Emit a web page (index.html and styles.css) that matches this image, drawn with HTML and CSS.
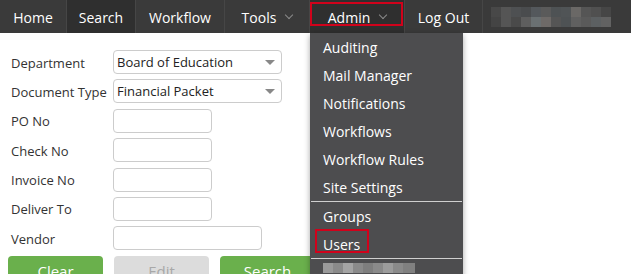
FILE: index.html
```html
<!DOCTYPE html>
<html lang="en">

<head>
    <meta charset="UTF-8">
    <meta name="viewport" content="width=device-width, initial-scale=1.0">
    <title>Search</title>

    <link rel="stylesheet" href="styles.css">
</head>

<body>
    <div class="navbar">
        <div class="nav-item item-home">Home</div>
        <div class="nav-item item-search active">Search</div>
        <div class="nav-item item-workflow">Workflow</div>
        <div class="nav-item item-tools">Tools <span class="caret"></span></div>
        <div class="nav-item item-admin open">Admin <span class="caret"></span>
            <div class="mark mark-admin"></div>
            <div class="dropdown">
                <div class="drop-item">Auditing</div>
                <div class="drop-item">Mail Manager</div>
                <div class="drop-item">Notifications</div>
                <div class="drop-item">Workflows</div>
                <div class="drop-item">Workflow Rules</div>
                <div class="drop-item">Site Settings</div>
                <div class="divider"></div>
                <div class="drop-item">Groups</div>
                <div class="drop-item users">Users
                    <div class="mark mark-users"></div>
                </div>
                <div class="divider"></div>
                <div class="drop-item">
                    <svg class="blur-small" width="92" height="10" viewBox="0 0 92 10">
                        <rect x="0" y="0" width="92" height="10" fill="#8a8a8a" />
                        <rect x="0" y="0" width="10" height="10" fill="#9a9a9a" />
                        <rect x="20" y="0" width="10" height="10" fill="#a4a4a4" />
                        <rect x="40" y="0" width="10" height="10" fill="#7e7e7e" />
                        <rect x="60" y="0" width="10" height="10" fill="#9c9c9c" />
                        <rect x="80" y="0" width="12" height="10" fill="#808080" />
                    </svg>
                </div>
            </div>
        </div>
        <div class="nav-item item-logout">Log Out</div>
        <div class="nav-user">
            <svg width="120" height="20" viewBox="0 0 120 20">
                <rect x="0" y="0" width="10" height="10" fill="#484848" />
                <rect x="10" y="0" width="10" height="10" fill="#555555" />
                <rect x="20" y="0" width="10" height="10" fill="#4e5052" />
                <rect x="30" y="0" width="10" height="10" fill="#4a4c4e" />
                <rect x="40" y="0" width="10" height="10" fill="#54585c" />
                <rect x="50" y="0" width="10" height="10" fill="#5a5a5a" />
                <rect x="60" y="0" width="10" height="10" fill="#4e5254" />
                <rect x="70" y="0" width="10" height="10" fill="#505456" />
                <rect x="80" y="0" width="10" height="10" fill="#6a6866" />
                <rect x="90" y="0" width="10" height="10" fill="#555555" />
                <rect x="100" y="0" width="10" height="10" fill="#505050" />
                <rect x="110" y="0" width="10" height="10" fill="#464646" />
                <rect x="0" y="10" width="10" height="10" fill="#444444" />
                <rect x="10" y="10" width="10" height="10" fill="#555555" />
                <rect x="20" y="10" width="10" height="10" fill="#4a4a4a" />
                <rect x="30" y="10" width="10" height="10" fill="#5e5e5e" />
                <rect x="40" y="10" width="10" height="10" fill="#6a7072" />
                <rect x="50" y="10" width="10" height="10" fill="#6e6a68" />
                <rect x="60" y="10" width="10" height="10" fill="#555555" />
                <rect x="70" y="10" width="10" height="10" fill="#4e5254" />
                <rect x="80" y="10" width="10" height="10" fill="#606060" />
                <rect x="90" y="10" width="10" height="10" fill="#5a5a5a" />
                <rect x="100" y="10" width="10" height="10" fill="#5c6062" />
                <rect x="110" y="10" width="10" height="10" fill="#626262" />
            </svg>
        </div>
    </div>

    <div class="search-form">
        <div class="form-row">
            <label>Department</label>
            <div class="select wide">Board of Education<span class="arrow"></span></div>
        </div>
        <div class="form-row">
            <label>Document Type</label>
            <div class="select wide">Financial Packet<span class="arrow"></span></div>
        </div>
        <div class="form-row">
            <label>PO No</label>
            <input type="text">
        </div>
        <div class="form-row">
            <label>Check No</label>
            <input type="text">
        </div>
        <div class="form-row">
            <label>Invoice No</label>
            <input type="text">
        </div>
        <div class="form-row">
            <label>Deliver To</label>
            <input type="text">
        </div>
        <div class="form-row">
            <label>Vendor</label>
            <input class="vendor" type="text">
        </div>
        <div class="buttons">
            <div class="btn">Clear</div>
            <div class="btn disabled">Edit</div>
            <div class="btn">Search</div>
        </div>
    </div>
</body>

</html>
```

FILE: styles.css
```css
* {
    box-sizing: border-box;
}

body {
    margin: 0;
    font-family: "Open Sans", "Noto Sans", sans-serif;
    background-color: white;
    overflow: hidden;
}

.navbar {
    height: 33px;
    background-color: #3a3a3a;
    display: flex;
    align-items: stretch;
}

.nav-item {
    position: relative;
    display: flex;
    align-items: center;
    justify-content: center;
    padding-top: 1px;
    color: white;
    font-size: 14px;
    border-right: 1px solid #464646;
}

.item-home {
    width: 67px;
}

.item-search {
    width: 69px;
}

.item-workflow {
    width: 89px;
}

.item-tools {
    width: 85px;
}

.item-admin {
    width: 95px;
}

.item-logout {
    width: 78px;
}

.nav-item.active,
.nav-item.open {
    background-color: #2f2f2f;
}

.caret {
    display: inline-block;
    width: 6px;
    height: 6px;
    border-right: 1px solid #8a8a8a;
    border-bottom: 1px solid #8a8a8a;
    transform: rotate(45deg);
    margin: 0 0 4px 10px;
}

.nav-user {
    padding: 7px 0 0 8px;
}

.mark {
    position: absolute;
    border: 2px solid #d0021b;
}

.mark-admin {
    left: 0;
    top: 2px;
    width: 93px;
    height: 24px;
}

.dropdown {
    position: absolute;
    left: 0;
    top: 33px;
    width: 153px;
    height: 250px;
    background-color: #4d4d4f;
    box-shadow: 0 2px 6px rgba(0, 0, 0, 0.35);
    z-index: 5;
}

.drop-item {
    position: relative;
    height: 28px;
    line-height: 29px;
    padding-left: 13px;
    color: white;
    font-size: 14px;
}

.divider {
    height: 1px;
    margin: 0 1px;
    background-color: #cfcfcf;
}

.mark-users {
    left: 5px;
    top: -1px;
    width: 54px;
    height: 24px;
}

.blur-small {
    vertical-align: middle;
    margin-top: -14px;
}

.search-form {
    padding: 17px 0 0 11px;
    color: #333;
    font-size: 13px;
}

.form-row {
    display: flex;
    align-items: center;
    height: 24px;
    margin-bottom: 5.4px;
}

label {
    width: 102px;
    flex-shrink: 0;
    white-space: nowrap;
    padding-top: 1px;
}

.select {
    position: relative;
    height: 24px;
    line-height: 22px;
    padding-left: 3px;
    border: 1px solid #ccc;
    border-radius: 4px;
    color: #222;
}

.select.wide {
    width: 169px;
}

.arrow {
    position: absolute;
    right: 6px;
    top: 9px;
    border-left: 5px solid transparent;
    border-right: 5px solid transparent;
    border-top: 5px solid #888;
}

input {
    width: 99px;
    height: 24px;
    border: 1px solid #ccc;
    border-radius: 4px;
    margin: 0;
}

input.vendor {
    width: 149px;
}

.buttons {
    display: flex;
    gap: 11px;
    margin-left: -3px;
    margin-top: 0.6px;
}

.btn {
    width: 95px;
    height: 32px;
    padding-top: 5px;
    text-align: center;
    background-color: #6ab04c;
    color: white;
    font-size: 15px;
    border-radius: 4px;
}

.btn.disabled {
    background-color: #dcdcdc;
    color: #a8a8a8;
}
```
